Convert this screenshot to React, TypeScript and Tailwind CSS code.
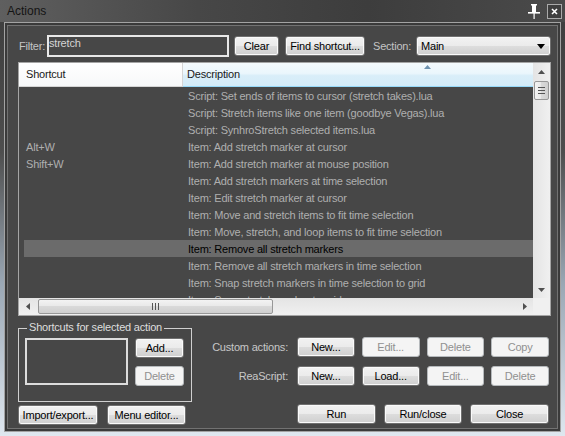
import clsx from "clsx";

const rows = [
  { key: "", desc: "Script: Set ends of items to cursor (stretch takes).lua" },
  { key: "", desc: "Script: Stretch items like one item (goodbye Vegas).lua" },
  { key: "", desc: "Script: SynhroStretch selected items.lua" },
  { key: "Alt+W", desc: "Item: Add stretch marker at cursor" },
  { key: "Shift+W", desc: "Item: Add stretch marker at mouse position" },
  { key: "", desc: "Item: Add stretch markers at time selection" },
  { key: "", desc: "Item: Edit stretch marker at cursor" },
  { key: "", desc: "Item: Move and stretch items to fit time selection" },
  { key: "", desc: "Item: Move, stretch, and loop items to fit time selection" },
  { key: "", desc: "Item: Remove all stretch markers", selected: true },
  { key: "", desc: "Item: Remove all stretch markers in time selection" },
  { key: "", desc: "Item: Snap stretch markers in time selection to grid" },
  { key: "", desc: "Item: Snap stretch marker to grid" },
];

function Btn({ label, className, disabled }: { label: string; className?: string; disabled?: boolean }) {
  return (
    <button
      type="button"
      className={clsx(
        "flex h-[20px] items-center justify-center rounded-[3px] border text-[11px] tracking-[-0.2px] leading-none",
        disabled
          ? "border-[#b5b9bc] bg-[#f4f4f4] text-[#909090]"
          : "border-[#707070] bg-[linear-gradient(to_bottom,#f2f2f2_0%,#ebebeb_50%,#dddddd_50%,#cfcfcf_100%)] text-black shadow-[inset_0_0_0_1px_#fafafa]",
        className
      )}
    >
      {label}
    </button>
  );
}

function Tri({ dir }: { dir: "up" | "down" | "left" | "right" }) {
  const pts = {
    up: "0,4 3.5,0 7,4",
    down: "0,0 7,0 3.5,4",
    left: "4,0 4,7 0,3.5",
    right: "0,0 0,7 4,3.5",
  }[dir];
  const vertical = dir === "up" || dir === "down";
  return (
    <svg width={vertical ? 7 : 4} height={vertical ? 4 : 7} viewBox={vertical ? "0 0 7 4" : "0 0 4 7"}>
      <polygon points={pts} fill="#4f4f4f" />
    </svg>
  );
}

export default function App() {
  return (
    <div className="flex h-[436px] w-[565px] flex-col overflow-hidden bg-[linear-gradient(to_bottom,#3d3d3d_0%,#4e4e4e_35%,#9aa7b4_65%,#dfe7ef_100%)] font-['Liberation_Sans',Arial,sans-serif]">
      {/* title bar */}
      <div className="flex h-[22px] items-center pl-[7px] pr-[3px] bg-[linear-gradient(to_right,#5f5f5f,#474747_35%,#3d3d3d_65%,#4a4a4a)]">
        <span className="text-[12px] text-[#141414]">Actions</span>
        <svg className="ml-auto" width="14" height="16" viewBox="0 0 14 16">
          <rect x="4" y="1" width="6" height="1.5" fill="#fff" />
          <rect x="5" y="2" width="4" height="7" fill="#fff" />
          <rect x="1" y="9" width="12" height="1.6" fill="#fff" />
          <rect x="6.5" y="10" width="1.2" height="6" fill="#fff" />
        </svg>
        <div className="ml-[6px] flex h-[15px] w-[15px] items-center justify-center border border-[#a9a9a9] bg-[#3e3e3e]">
          <svg width="7" height="7" viewBox="0 0 7 7">
            <path d="M1 1L6 6M6 1L1 6" stroke="#fff" strokeWidth="1.6" />
          </svg>
        </div>
      </div>

      {/* window body */}
      <div className="flex flex-1 px-[4px] pb-[4px]">
        <div className="flex flex-1 border border-[#a3a3a3] bg-[#3a3a3a] p-[2px]">
          <div className="flex flex-1 flex-col border border-[#727272] bg-[#474747]">
            {/* filter row */}
            <div className="mt-[9px] flex h-[22px] items-center pl-[11px] text-[11px] tracking-[-0.2px]">
              <span className="w-[28px] text-[#c4c4c4]">Filter:</span>
              <div className="h-[22px] w-[182px] border-2 border-[#e8e8e8] text-[11px] leading-[13px] text-[#d4d4d4]">
                stretch
              </div>
              <Btn label="Clear" className="ml-[5px] w-[45px]" />
              <Btn label="Find shortcut..." className="ml-[6px] w-[80px]" />
              <span className="ml-[8px] w-[43px] text-[#c4c4c4]">Section:</span>
              <div className="relative flex h-[20px] w-[135px] items-center rounded-[3px] border border-[#707070] bg-[linear-gradient(to_bottom,#f2f2f2_0%,#ebebeb_50%,#dddddd_50%,#cfcfcf_100%)] pl-[4px] text-black shadow-[inset_0_0_0_1px_#fafafa]">
                Main
                <svg className="absolute right-[5px] top-[7px]" width="8" height="5" viewBox="0 0 8 5">
                  <polygon points="0,0 8,0 4,5" fill="#000" />
                </svg>
              </div>
            </div>

            {/* action list */}
            <div className="ml-[10px] mt-[5px] flex h-[254px] w-[533px] border border-[#a5a5a5] text-[11px] tracking-[-0.2px]">
              <div className="flex w-[514px] flex-col">
                <div className="flex h-[24px]">
                  <div className="flex w-[164px] items-center border-b border-r border-[#d5d5d5] bg-[linear-gradient(to_bottom,#ffffff,#f7f8f9)] pl-[7px] text-[#1a1a1a]">
                    Shortcut
                  </div>
                  <div className="relative flex flex-1 items-center border-b border-[#96d9f9] bg-[linear-gradient(to_bottom,#f4fafd_0%,#eaf6fc_45%,#d9eef9_55%,#d3ebf8_100%)] pl-[4px] text-[#1a1a1a]">
                    Description
                    <svg className="absolute left-[241px] top-[2px]" width="7" height="4" viewBox="0 0 7 4">
                      <polygon points="0,4 3.5,0 7,4" fill="#6e93b0" />
                    </svg>
                  </div>
                </div>
                <div className="h-[211px] overflow-hidden">
                  {rows.map((r, i) => (
                    <div
                      key={i}
                      className={clsx(
                        "ml-[5px] flex h-[17px] items-center whitespace-nowrap pt-[2px]",
                        r.selected ? "bg-[#6b6b6b] text-black" : "text-[#afafaf]"
                      )}
                    >
                      <span className="w-[159px] pl-[2px]">{r.key}</span>
                      <span className="pl-[5px]">{r.desc}</span>
                    </div>
                  ))}
                </div>
                {/* horizontal scrollbar */}
                <div className="flex h-[17px] items-center bg-[linear-gradient(to_bottom,#e4e4e4,#f0f0f0)]">
                  <div className="flex w-[17px] items-center justify-center">
                    <Tri dir="left" />
                  </div>
                  <div className="ml-[2px] flex h-[15px] w-[235px] items-center justify-center rounded-[2px] border border-[#979797] bg-[linear-gradient(to_bottom,#f3f3f3_0%,#e8e8e8_50%,#d9d9d9_50%,#cfcfcf_100%)]">
                    <div className="flex gap-[2px]">
                      <div className="h-[7px] w-px bg-[#555]" />
                      <div className="h-[7px] w-px bg-[#555]" />
                      <div className="h-[7px] w-px bg-[#555]" />
                    </div>
                  </div>
                  <div className="flex-1" />
                  <div className="flex w-[17px] items-center justify-center">
                    <Tri dir="right" />
                  </div>
                </div>
              </div>
              {/* vertical scrollbar */}
              <div className="flex w-[17px] flex-col bg-[linear-gradient(to_right,#e4e4e4,#f0f0f0)]">
                <div className="flex h-[17px] items-center justify-center">
                  <Tri dir="up" />
                </div>
                <div className="mx-[1px] mt-[1px] flex h-[19px] flex-col items-center justify-center gap-[2px] rounded-[2px] border border-[#979797] bg-[linear-gradient(to_right,#f3f3f3_0%,#e8e8e8_50%,#d9d9d9_50%,#cfcfcf_100%)]">
                  <div className="h-px w-[7px] bg-[#555]" />
                  <div className="h-px w-[7px] bg-[#555]" />
                  <div className="h-px w-[7px] bg-[#555]" />
                </div>
                <div className="flex-1" />
                <div className="flex h-[17px] items-center justify-center">
                  <Tri dir="down" />
                </div>
                <div className="h-[17px] bg-[#f0f0f0]" />
              </div>
            </div>

            {/* lower area */}
            <div className="mt-[12px] flex items-start text-[11px] tracking-[-0.2px]">
              <div className="ml-[10px] w-[174px]">
                <div className="relative h-[74px] border border-[#cfcfcf]">
                  <span className="absolute left-[8px] top-[-8px] bg-[#474747] px-[2px] leading-[13px] text-[#dedede]">
                    Shortcuts for selected action
                  </span>
                  <div className="flex pl-[6px] pt-[9px]">
                    <div className="h-[47px] w-[103px] border-2 border-[#dcdcdc]" />
                    <div className="ml-[7px] flex flex-col">
                      <Btn label="Add..." className="w-[49px]" />
                      <Btn label="Delete" className="mt-[8px] w-[49px]" disabled />
                    </div>
                  </div>
                </div>
                <div className="mt-[3px] flex">
                  <Btn label="Import/export..." className="w-[80px]" />
                  <Btn label="Menu editor..." className="ml-[9px] w-[79px]" />
                </div>
              </div>

              <div className="flex flex-col pt-[9px]">
                <div className="flex items-center">
                  <span className="w-[96px] text-right text-[#c8c8c8]">Custom actions:</span>
                  <div className="ml-[9px] grid w-[252px] grid-cols-4 gap-[7px]">
                    <Btn label="New..." />
                    <Btn label="Edit..." disabled />
                    <Btn label="Delete" disabled />
                    <Btn label="Copy" disabled />
                  </div>
                </div>
                <div className="mt-[9px] flex items-center">
                  <span className="w-[96px] text-right text-[#c8c8c8]">ReaScript:</span>
                  <div className="ml-[9px] grid w-[252px] grid-cols-4 gap-[7px]">
                    <Btn label="New..." />
                    <Btn label="Load..." />
                    <Btn label="Edit..." disabled />
                    <Btn label="Delete" disabled />
                  </div>
                </div>
                <div className="mt-[18px] ml-[105px] grid w-[252px] grid-cols-3 gap-[8px]">
                  <Btn label="Run" />
                  <Btn label="Run/close" />
                  <Btn label="Close" />
                </div>
              </div>
            </div>
          </div>
        </div>
      </div>
    </div>
  );
}
